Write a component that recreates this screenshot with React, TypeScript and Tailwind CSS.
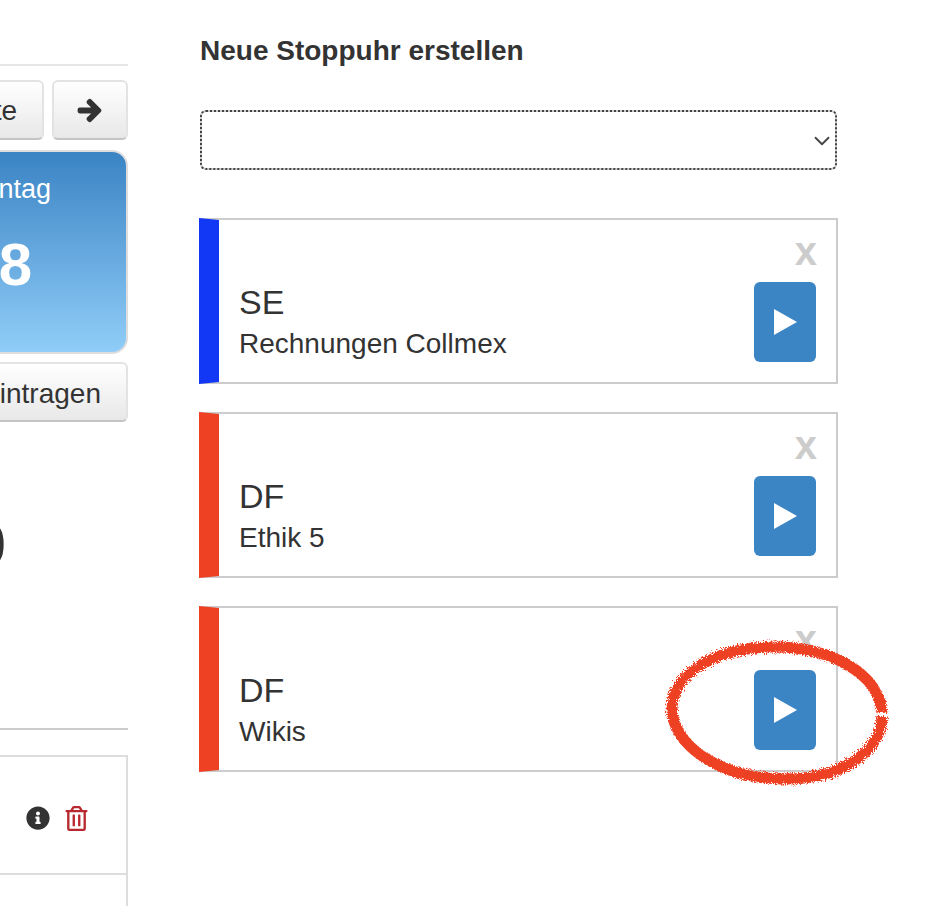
import { ChevronDown } from 'lucide-react';
import { FaArrowRight, FaInfoCircle, FaRegTrashAlt } from 'react-icons/fa';

const btn =
  'h-[60px] flex items-center flex-shrink-0 rounded-md border-2 border-[#e3e3e3] border-b-[#c4c4c4] bg-gradient-to-b from-white to-[#e8e8e8] text-[#333] text-[28px]';

const timers = [
  { id: 1, code: 'SE', name: 'Rechnungen Collmex', bar: 'border-l-[#1238f5]' },
  { id: 2, code: 'DF', name: 'Ethik 5', bar: 'border-l-[#ee4123]' },
  { id: 3, code: 'DF', name: 'Wikis', bar: 'border-l-[#ee4123]' },
];

const TimerCard = ({ code, name, bar }: { code: string; name: string; bar: string }) => (
  <div className={`h-[166px] flex items-end justify-between border-2 border-l-[20px] border-[#ccc] pl-[20px] pr-[20px] pb-[20px] ${bar}`}>
    <div className="text-[#333]">
      <p className="text-[34px] leading-[40px] mb-[3px]">{code}</p>
      <p className="text-[28px] leading-[38px] -mb-[1px]">{name}</p>
    </div>
    <div className="flex flex-col items-end">
      <span className="text-[40px] leading-[40px] font-bold text-[#ccc] mb-[11px] -mr-[1px]">x</span>
      <button className="w-[62px] h-[80px] rounded-md bg-[#3b85c5] flex items-center justify-center pl-[1px]">
        <svg width="23" height="26" viewBox="0 0 23 26">
          <polygon points="0,0 23,13 0,26" fill="#fff" />
        </svg>
      </button>
    </div>
  </div>
);

const App = () => {
  return (
    <div className="relative w-[946px] h-[906px] overflow-hidden bg-white flex font-['Liberation_Sans',Arial,sans-serif]">
      {/* left column, cut off by the window */}
      <aside className="w-[128px] flex-shrink-0 overflow-hidden pt-[64px]">
        <div className="border-t-2 border-[#e5e5e5]" />

        <div className="mt-[14px] flex justify-end gap-[8px]">
          <button className={`${btn} justify-end w-[120px] pr-[25px] pt-[2px]`}>Heute</button>
          <button className={`${btn} justify-center w-[76px] pr-[2px] pt-[1px]`}>
            <FaArrowRight className="text-[25px]" stroke="currentColor" strokeWidth={40} />
          </button>
        </div>

        <div className="mt-[10px] h-[204px] flex flex-col items-end rounded-[16px] border-2 border-[#ddd] bg-gradient-to-b from-[#3a84c4] to-[#90cdf8] text-white ml-[-60px] w-[188px]">
          <p className="text-[27px] leading-[32px] mt-[21px] pr-[75px]">Montag</p>
          <p className="text-[60px] leading-[64px] font-bold mt-[28px] pr-[94px]">8</p>
        </div>

        <div className="mt-[8px] flex justify-end">
          <button className={`${btn} justify-end w-[200px] pr-[25px] pt-[3px]`}>Eintragen</button>
        </div>

        <div className="mt-[91px] h-[64px] flex justify-end pr-[122px] text-[#333]">
          <span className="text-[60px] leading-[64px] font-bold flex-shrink-0">0</span>
        </div>

        <div className="mt-[151px] border-t-2 border-[#ccc]" />

        <div className="mt-[25px] border-t-2 border-r-2 border-[#ddd] h-[200px]">
          <div className="h-[118px] border-b-2 border-[#ddd] flex items-center justify-end gap-[14px] pr-[37px] pt-[6px]">
            <FaInfoCircle className="text-[24px] text-[#333]" />
            <FaRegTrashAlt className="text-[25px] text-[#b8292f]" />
          </div>
        </div>
      </aside>

      {/* stopwatches */}
      <main className="ml-[71px] w-[639px] flex-shrink-0">
        <h2 className="ml-[1px] mt-[35px] text-[28px] leading-[32px] font-bold text-[#333]">Neue Stoppuhr erstellen</h2>

        <div className="mt-[43px] ml-[1px] w-[637px] h-[60px] flex items-center justify-end rounded-md border-2 border-[#ccc] outline-2 outline-dotted outline-[#444] -outline-offset-2">
          <ChevronDown size={26} strokeWidth={1.7} className="text-[#444] mt-[2px]" />
        </div>

        <div className="mt-[48px] flex flex-col gap-[28px]">
          {timers.map((t) => (
            <TimerCard key={t.id} code={t.code} name={t.name} bar={t.bar} />
          ))}
        </div>
      </main>

      {/* hand drawn circle on top of the last card */}
      <svg className="absolute left-[660px] top-[635px]" width="235" height="158" viewBox="0 0 235 158" fill="none">
        <defs>
          <filter id="rough" x="-10%" y="-10%" width="120%" height="120%">
            <feTurbulence type="fractalNoise" baseFrequency="0.9" numOctaves="3" seed="4" />
            <feDisplacementMap in="SourceGraphic" scale="8" />
            <feGaussianBlur stdDeviation="0.6" />
          </filter>
        </defs>
        <path
          d="M222 78 C220 38 168 11 112 12 C56 13 13 38 12 72 C11 110 60 143 122 144 C178 145 222 118 222 81"
          stroke="#ee4123"
          strokeWidth="11"
          filter="url(#rough)"
        />
      </svg>
    </div>
  );
};

export default App;
